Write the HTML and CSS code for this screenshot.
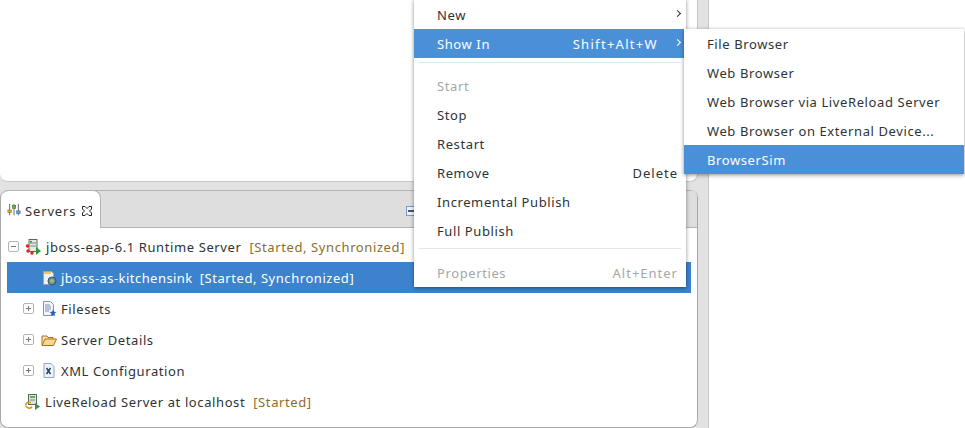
FILE: index.html
```html
<!DOCTYPE html>
<html lang="en">
<head>
<meta charset="utf-8">
<title>Servers</title>
<link rel="stylesheet" href="styles.css">
</head>
<body>
<div class="workbench">
  <div class="left">
    <div class="editor"></div>
    <div class="view">
      <div class="tabbar">
        <div class="tab">
          <svg class="ico16" viewBox="0 0 16 16"><path d="M3 1v13M8 1v13M13 1v13" stroke="#555" fill="none"/><rect x="1" y="8" width="4" height="3" fill="#e8b030" stroke="#7a5a10" stroke-width=".6"/><rect x="6" y="3" width="4" height="3" fill="#6fb04a" stroke="#37661f" stroke-width=".6"/><rect x="11" y="9" width="4" height="3" fill="#6d9fd8" stroke="#2d5c94" stroke-width=".6"/></svg>
          <span class="tabtitle">Servers</span>
          <svg class="close" viewBox="0 0 10 10"><path d="M.5.5h2.500L5 2.500 7 .5h2.500V3L7.500 5l2 2v2.500H7L5 7.500 3 9.500H.5V7l2-2-2-2z" fill="#fff" stroke="#222" stroke-width="1"/></svg>
        </div>
        <div class="minbtn"><svg viewBox="0 0 12 12" class="ico12"><rect x=".5" y="2.5" width="9" height="9" fill="#eef3fa" stroke="#7a9cc6"/><path d="M2 7h6" stroke="#223" stroke-width="1.4"/></svg></div>
      </div>
      <div class="tree">
        <div class="row lvl0">
          <svg class="twisty" viewBox="0 0 11 11"><rect x=".5" y=".5" width="10" height="10" rx="1.5" fill="#fff" stroke="#b4b4b4"/><path d="M3 5.5h5" stroke="#777"/></svg>
          <svg class="ico16" viewBox="0 0 16 16"><rect x="4" y="0.5" width="8" height="12" fill="#e4e8e4" stroke="#5a6a5a"/><path d="M5 4h6M5 7h6" stroke="#7a8a7a"/><rect x="5" y="2" width="2" height="1.5" fill="#3a9a3a"/><circle cx="2.500" cy="7" r="1.700" fill="#d22"/><circle cx="3" cy="12" r="1.700" fill="#d22"/><circle cx="7" cy="14" r="1.700" fill="#d22"/><path d="M11 8l5 4-5 4z" fill="#2d9a3a"/></svg>
          <span class="label">jboss-eap-6.1 Runtime Server</span><span class="status">[Started, Synchronized]</span>
        </div>
        <div class="row lvl1 selected">
          <svg class="ico16" viewBox="0 0 16 16"><path d="M2.500 1.500h8l2 2v11h-10z" fill="#eef1f6" stroke="#9aa6b5"/><path d="M3 2h7v2H3z" fill="#e9c870"/><circle cx="11" cy="11" r="4" fill="#6d8f9e" stroke="#3e5560"/><path d="M9 11h4M11 9v4" stroke="#9fd27a"/></svg>
          <span class="label">jboss-as-kitchensink</span><span class="status">[Started, Synchronized]</span>
        </div>
        <div class="row lvl1">
          <svg class="twisty" viewBox="0 0 11 11"><rect x=".5" y=".5" width="10" height="10" rx="1.5" fill="#fff" stroke="#b4b4b4"/><path d="M3 5.500h5M5.500 3v5" stroke="#777"/></svg>
          <svg class="ico16" viewBox="0 0 16 16"><path d="M2.500 .5h7l3 3v11h-10z" fill="#f2f5fa" stroke="#7f95b5"/><path d="M4 4h5M4 6h6M4 8h6M4 10h4" stroke="#7391c0"/><path d="M12 8.500l1 2.300 2.500.2-1.900 1.600.6 2.400-2.200-1.300-2.200 1.300.6-2.400L8.500 11l2.500-.2z" fill="#2a5fc4"/></svg>
          <span class="label">Filesets</span>
        </div>
        <div class="row lvl1">
          <svg class="twisty" viewBox="0 0 11 11"><rect x=".5" y=".5" width="10" height="10" rx="1.5" fill="#fff" stroke="#b4b4b4"/><path d="M3 5.500h5M5.500 3v5" stroke="#777"/></svg>
          <svg class="ico16" viewBox="0 0 16 16"><path d="M1 13V4h5l1 1.500h5V7" fill="#fbe6b8" stroke="#a8701e"/><path d="M1 13.500l3-6.500h11.500l-3 6.500z" fill="#fbd690" stroke="#a8701e"/></svg>
          <span class="label">Server Details</span>
        </div>
        <div class="row lvl1">
          <svg class="twisty" viewBox="0 0 11 11"><rect x=".5" y=".5" width="10" height="10" rx="1.5" fill="#fff" stroke="#b4b4b4"/><path d="M3 5.500h5M5.500 3v5" stroke="#777"/></svg>
          <svg class="ico16" viewBox="0 0 16 16"><path d="M3 .5h7l3 3v11H3z" fill="#f0f4fa" stroke="#8fa5c0"/><path d="M5.500 5l4 6M9.500 5l-4 6" stroke="#24406f" stroke-width="1.500" fill="none"/></svg>
          <span class="label">XML Configuration</span>
        </div>
        <div class="row lvl0 plain">
          <svg class="ico16" viewBox="0 0 16 16"><rect x="4.500" y=".5" width="8" height="10" fill="#dfe6df" stroke="#5a6a5a"/><path d="M6 3h5" stroke="#3a9a3a" stroke-width="1.500"/><path d="M6 6h5" stroke="#7a8a7a"/><path d="M7 8.500C3 7.500 1 10 2 11.500M2 12c1 2.500 5 3 6 .5" fill="none" stroke="#d79a20" stroke-width="1.700"/><path d="M11 9l5 3.500-5 3.500z" fill="#2d9a3a"/></svg>
          <span class="label">LiveReload Server at localhost</span><span class="status">[Started]</span>
        </div>
      </div>
    </div>
  </div>
  <div class="sash"></div>
  <div class="right"></div>
</div>

<div class="menu main-menu">
  <div class="item"><span>New</span><span class="arrow"></span></div>
  <div class="item active"><span>Show In</span><span class="accel">Shift+Alt+W</span><span class="arrow"></span></div>
  <div class="sep first"></div>
  <div class="item disabled"><span>Start</span></div>
  <div class="item"><span>Stop</span></div>
  <div class="item"><span>Restart</span></div>
  <div class="item"><span>Remove</span><span class="accel flush">Delete</span></div>
  <div class="item"><span>Incremental Publish</span></div>
  <div class="item"><span>Full Publish</span></div>
  <div class="sep second"></div>
  <div class="item disabled"><span>Properties</span><span class="accel flush">Alt+Enter</span></div>
</div>

<div class="menu sub-menu">
  <div class="item"><span>File Browser</span></div>
  <div class="item"><span>Web Browser</span></div>
  <div class="item"><span>Web Browser via LiveReload Server</span></div>
  <div class="item"><span>Web Browser on External Device...</span></div>
  <div class="item active"><span>BrowserSim</span></div>
</div>
</body>
</html>
```
FILE: styles.css
```css
* { box-sizing: border-box; }
html, body { margin: 0; padding: 0; height: 100%; overflow: hidden; }
body {
  width: 965px;
  height: 428px;
  position: relative;
  background: #fff;
  font-family: "Noto Sans", "Open Sans", sans-serif;
  font-size: 13px;
  letter-spacing: .6px;
  color: #2e3436;
}
.workbench { display: flex; height: 428px; }
.left {
  width: 698px;
  display: flex;
  flex-direction: column;
  gap: 8px;
  background: #e2e2e2;
}
.editor {
  height: 182px;
  background: #fff;
  border: 1px solid #c8c8c8;
  border-top: 0;
  border-left: 0;
  border-radius: 0 0 8px 8px;
}
.view {
  flex: 1;
  display: flex;
  flex-direction: column;
  background: #fff;
  border: 1px solid #a8a8a8;
  border-top: 0;
  border-radius: 8px;
  overflow: hidden;
}
.tabbar {
  height: 38px;
  display: flex;
  background: #dedede;
  border-top: 1px solid #b4b4b4;
  border-bottom: 1px solid #b4b4b4;
  flex: none;
}
.tab {
  width: 100px;
  height: 38px;
  margin-top: -1px;
  padding: 11px 0 0 6px;
  display: flex;
  align-items: flex-start;
  background: #fff;
  border: 1px solid #b4b4b4;
  border-bottom: 0;
  border-left: 0;
  border-radius: 8px 8px 0 0;
}
.tab .ico16 { width: 14px; height: 14px; margin: 1px 4px 0 0; }
.tabtitle { line-height: 18px; letter-spacing: .85px; }
.close { width: 10px; height: 10px; margin: 4px 0 0 6px; }
.minbtn { margin: 13px 0 0 305px; }
.ico12 { width: 12px; height: 12px; display: block; }
.tree { padding: 3px 6px 0; flex: 1; }
.row {
  height: 31px;
  display: flex;
  align-items: center;
  white-space: nowrap;
}
.lvl0 { padding-left: 1px; }
.lvl1 { padding-left: 16px; }
.lvl1.selected { padding-left: 34px; }
.plain { padding-left: 17px; }
.twisty { width: 11px; height: 11px; flex: none; margin-right: 7px; }
.ico16 { width: 16px; height: 16px; flex: none; margin-right: 4px; }
.lvl0 .twisty { margin-right: 6px; }
.lvl0 .ico16 { margin-right: 5px; }
.plain .ico16 { margin-right: 5px; }
.status { color: #8b6d2f; margin-left: 8px; }
.selected { background: #3d82cc; color: #fff; }
.selected .label { letter-spacing: .45px; }
.selected .status { color: #fff; margin-left: 7px; letter-spacing: .55px; }
.sash { width: 10px; background: #e2e2e2; }
.right { flex: 1; background: #fff; border-left: 1px solid #c8c8c8; }

.menu {
  position: absolute;
  background: #fff;
  box-shadow: 0 1px 4px rgba(0, 0, 0, .45);
}
.main-menu { left: 414px; top: -1px; width: 272px; height: 288px; padding-top: 1px; }
.sub-menu { left: 684px; top: 29px; width: 280px; height: 145px; }
.item {
  height: 29px;
  padding-left: 23px;
  display: flex;
  align-items: center;
  position: relative;
  white-space: nowrap;
}
.active { background: #4a90d9; color: #fff; }
.disabled { color: #a4a8a8; }
.accel { position: absolute; right: 28px; letter-spacing: 1.3px; }
.accel.flush { right: 8px; letter-spacing: 1px; }
.arrow {
  position: absolute;
  right: 6px;
  top: 11px;
  width: 5px;
  height: 5px;
  border-top: 1.5px solid currentColor;
  border-right: 1.5px solid currentColor;
  transform: rotate(45deg);
}
.sep { background: #e6e6e6; height: 1px; margin-left: 5px; margin-right: 5px; }
.sep.first { margin-top: 4px; margin-bottom: 9px; }
.sep.second { margin-top: 3px; margin-bottom: 9px; }
.sep.first + .item { margin-top: -1px; }
```
